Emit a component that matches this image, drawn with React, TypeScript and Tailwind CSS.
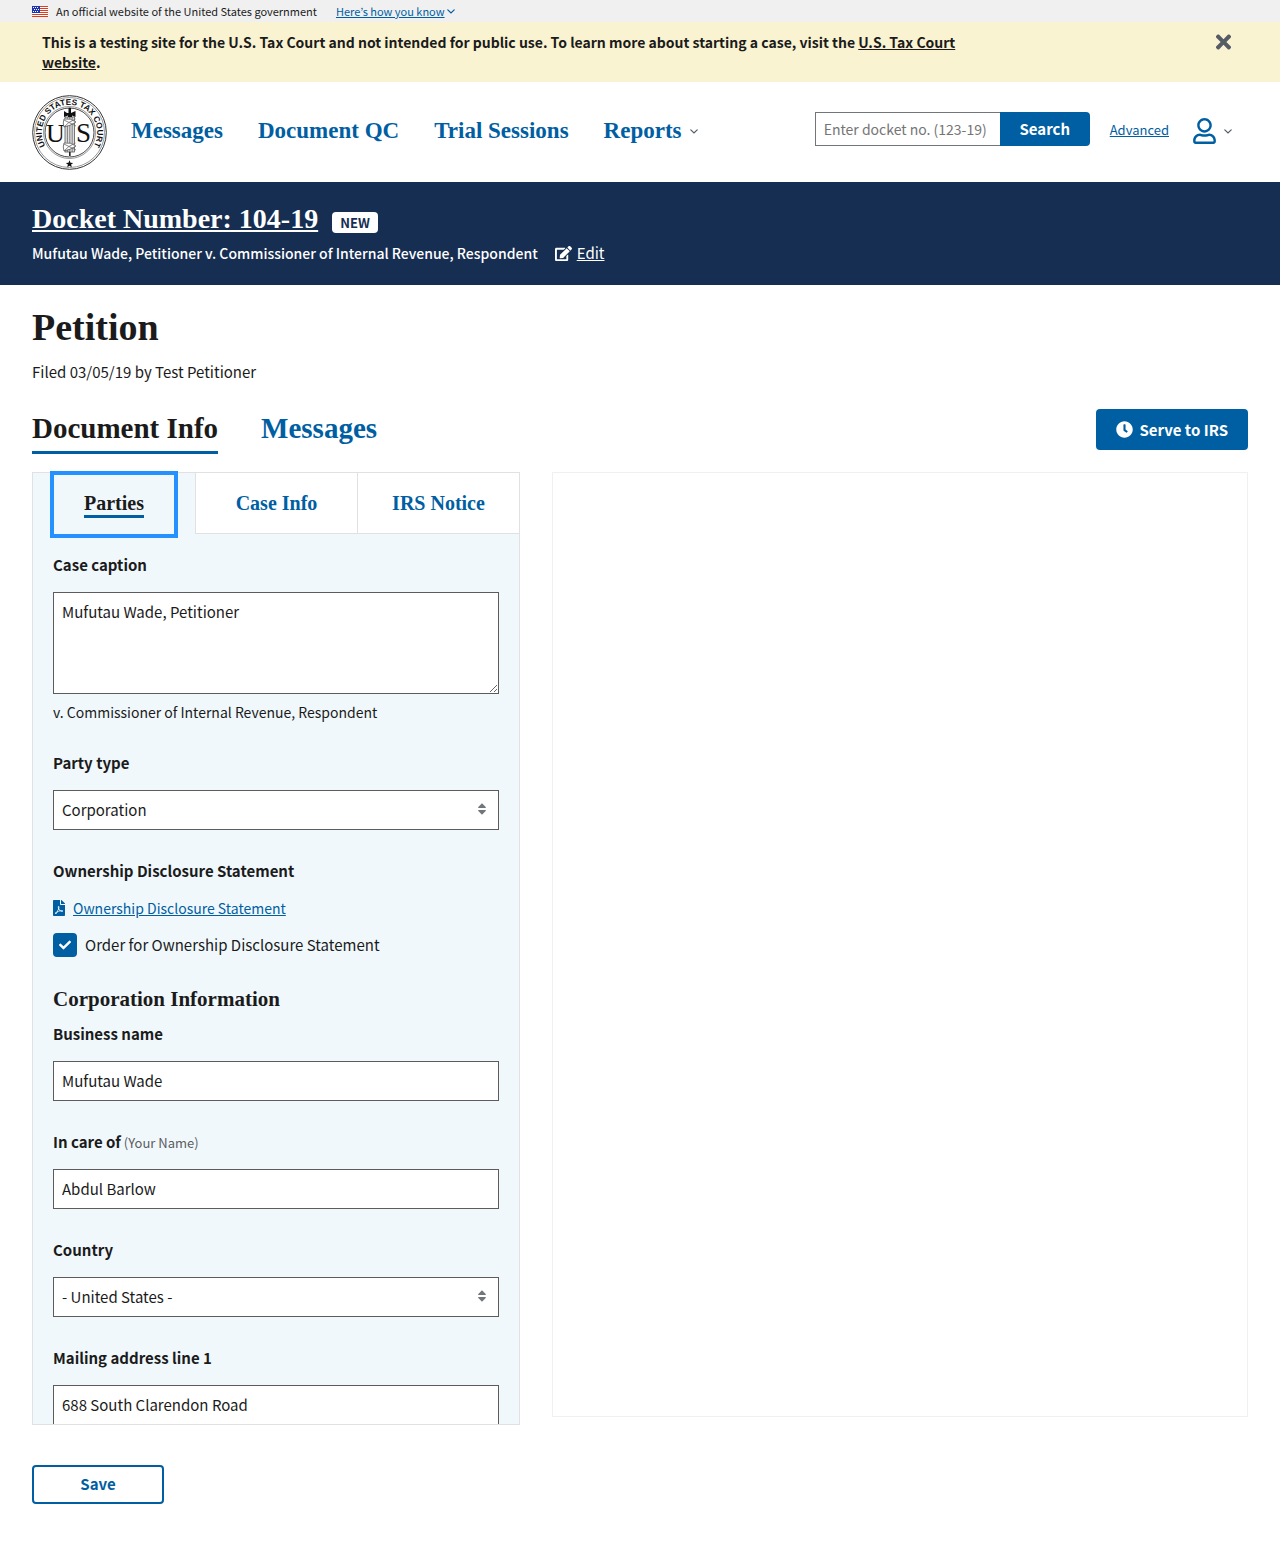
import React from "react";
import { FaCheck, FaClock, FaEdit, FaFilePdf, FaRegUser, FaTimes } from "react-icons/fa";

const serif = "font-['Source_Serif_Pro','Liberation_Serif',serif] font-bold";
const sans = "font-['Source_Sans_Pro','Noto_Sans_CJK_KR',sans-serif]";
const field = "block w-full border border-[#5c5c5c] bg-white px-2 text-[15px] text-[#1b1b1b]";

function Flag() {
  return (
    <svg viewBox="0 0 16 11" className="h-[11px] w-4 shrink-0" aria-hidden="true" shapeRendering="crispEdges">
      <rect width="16" height="11" fill="#fff" />
      {[0, 2, 4, 6, 8, 10].map((y) => (
        <rect key={y} y={y} width="16" height="1" fill="#db3e1f" />
      ))}
      <rect width="8" height="7" fill="#1e33b1" />
      {[1, 3, 5].map((y) =>
        [1, 3, 5].map((x) => <rect key={`${x}-${y}`} x={y === 3 ? x + 1 : x} y={y} width="1" height="1" fill="#fff" />)
      )}
    </svg>
  );
}

function Chevron({ className }: { className: string }) {
  return (
    <svg viewBox="0 0 8 5" className={className} fill="none" stroke="currentColor" strokeWidth="1.2" strokeLinecap="round" aria-hidden="true">
      <path d="M0.8 0.8 L4 4 L7.2 0.8" />
    </svg>
  );
}

function SortIcon() {
  return (
    <svg viewBox="0 0 8 12" className="pointer-events-none absolute right-[13px] top-[13px] h-3 w-2" fill="#71767a" aria-hidden="true">
      <path d="M4 0.3 L7.7 4 Q8.3 5 7.3 5 H0.7 Q-0.3 5 0.3 4 Z M4 11.7 L7.7 8 Q8.3 7 7.3 7 H0.7 Q-0.3 7 0.3 8 Z" />
    </svg>
  );
}

function Seal() {
  return (
    <svg viewBox="0 0 75 75" className="size-[75px]" role="img" aria-label="United States Tax Court seal">
      <g fill="none" stroke="#333">
        <circle cx="37.5" cy="37.5" r="36.8" strokeWidth="1" />
        <circle cx="37.5" cy="37.5" r="35" strokeWidth="0.5" />
        <circle cx="37.5" cy="37.5" r="26" strokeWidth="0.5" />
        <circle cx="37.5" cy="37.5" r="24.5" strokeWidth="0.9" />
      </g>
      <path id="seal-arc" d="M37 65.2 A27.7 27.7 0 1 1 38 65.2" fill="none" />
      <text className="font-['Liberation_Sans',sans-serif] font-bold" fontSize="8.3" fill="#111">
        <textPath href="#seal-arc" startOffset="50%" textAnchor="middle">UNITED STATES TAX COURT</textPath>
      </text>
      <text x="23.5" y="47" textAnchor="middle" fontSize="26" fill="#111" className="font-['Liberation_Serif',serif]">U</text>
      <text x="51.5" y="47" textAnchor="middle" fontSize="27" fill="#111" className="font-['Liberation_Serif',serif]">S</text>
      <rect x="33" y="15" width="10" height="45" fill="#fff" />
      <rect x="33" y="22" width="9.5" height="35" fill="#ddd" stroke="#444" strokeWidth="0.7" />
      <path d="M35.4 22 V57 M37.8 12 V61 M40.2 22 V57" stroke="#666" strokeWidth="0.8" />
      <path d="M32 16 L35 18 H36.5 V13 H39 V18 L43.5 16 V22 L40 20.5 V22 H36 V20.5 L32 22 Z" fill="#111" />
      <path d="M32 24 Q39 23 44 27 Q38 31 32 32 Q30.5 28 32 24 Z M32 48 Q39 47 44 51 Q38 55 32 56 Q30.5 52 32 48 Z" fill="#fff" stroke="#555" strokeWidth="0.8" />
      <path d="M43.5 24 Q36 27 32 32 M44 31 Q38 28 32 25 M43.5 48 Q36 51 32 56 M44 55 Q38 52 32 49" fill="none" stroke="#666" strokeWidth="0.8" />
      <path d="M37.8 57 V61" stroke="#222" strokeWidth="1.5" />
      <path d="M37.5 65.2 L38.5 67.8 L41.2 67.9 L39.1 69.6 L39.8 72.2 L37.5 70.7 L35.2 72.2 L35.9 69.6 L33.8 67.9 L36.5 67.8 Z" fill="#111" />
    </svg>
  );
}

function Label({ id, children, hint }: { id: string; children: React.ReactNode; hint?: string }) {
  return (
    <label htmlFor={id} className="mb-[15px] block text-[15px] leading-6 font-bold">
      {children}
      {hint && <span className="text-[13px] leading-none font-normal text-[#5c5c5c]"> {hint}</span>}
    </label>
  );
}

function TextField({ id, label, hint, value }: { id: string; label: string; hint?: string; value: string }) {
  return (
    <div>
      <Label id={id} hint={hint}>{label}</Label>
      <input id={id} type="text" defaultValue={value} className={`${field} h-10 pb-0.5`} />
    </div>
  );
}

function SelectField({ id, label, value }: { id: string; label: string; value: string }) {
  return (
    <div>
      <Label id={id}>{label}</Label>
      <div className="relative">
        <select id={id} className={`${field} h-10 appearance-none`}>
          <option>{value}</option>
        </select>
        <SortIcon />
      </div>
    </div>
  );
}

export default function App() {
  return (
    <div className={`${sans} bg-white pb-16 text-[15px] leading-6 text-[#1b1b1b]`}>
      <div className="flex h-[22px] items-center bg-[#f0f0f0] px-8 text-[11px]">
        <Flag />
        <span className="ml-2">An official website of the United States government</span>
        <button type="button" className="ml-[19px] flex items-center gap-0.5 text-[#005ea2]">
          <span className="underline">Here’s how you know</span>
          <Chevron className="h-[5px] w-2" />
        </button>
      </div>

      <div className="flex items-start justify-between bg-[#faf3d1] py-2.5 pr-12 pl-[42px]">
        <p className="max-w-[960px] text-[14px] leading-5 font-bold">
          This is a testing site for the U.S. Tax Court and not intended for public use. To learn more about starting a case, visit the{" "}
          <a href="#court" className="underline">U.S. Tax Court website</a>.
        </p>
        <button type="button" aria-label="Close" className="text-[#565c65]">
          <FaTimes className="h-5 w-[17px] scale-110" />
        </button>
      </div>

      <header className="flex h-[100px] items-center pr-12 pl-8">
        <a href="#home"><Seal /></a>
        <nav className={`${serif} mb-0.5 ml-6 flex items-center gap-[35px] text-[23px] leading-8 text-[#005ea2]`}>
          <a href="#messages">Messages</a>
          <a href="#qc">Document QC</a>
          <a href="#sessions">Trial Sessions</a>
          <button type="button" className="flex items-center gap-2">
            Reports
            <Chevron className="h-[5px] w-2 text-[#565c65]" />
          </button>
        </nav>
        <form className="mb-1.5 ml-auto flex h-[34px]" onSubmit={(e) => e.preventDefault()}>
          <input
            type="text"
            aria-label="Docket number"
            placeholder="Enter docket no. (123-19)"
            className="w-[185px] border border-r-0 border-[#71767a] px-2 text-[14px] placeholder:text-[#757575]"
          />
          <button type="submit" className="w-[90px] rounded-r bg-[#005ea2] text-[15px] font-bold text-white">Search</button>
        </form>
        <a href="#advanced" className="mb-1 ml-5 text-[13px] text-[#005ea2] underline">Advanced</a>
        <button type="button" aria-label="Account" className="mb-0.5 ml-6 flex items-center gap-2">
          <FaRegUser className="h-[26px] w-[23px] text-[#005ea2]" />
          <Chevron className="h-[5px] w-2 text-[#565c65]" />
        </button>
      </header>

      <div className="h-[103px] bg-[#162e51] px-8 pt-[19px] text-white">
        <div className="flex items-center gap-3.5">
          <h1 className={`${serif} text-[28px] leading-9`}>
            <a href="#docket" className="underline decoration-2 underline-offset-2">Docket Number: 104-19</a>
          </h1>
          <span className="mt-1.5 h-[21px] rounded-sm bg-white px-2 text-[13px] leading-[22px] font-bold text-[#162e51]">NEW</span>
        </div>
        <div className="mt-1 flex items-center">
          <p className="text-[14px] font-medium">Mufutau Wade, Petitioner v. Commissioner of Internal Revenue, Respondent</p>
          <a href="#edit" className="ml-[17px] flex items-center gap-[5px] text-[15px]">
            <FaEdit className="size-[17px]" />
            <span className="underline">Edit</span>
          </a>
        </div>
      </div>

      <main className="px-8">
        <h2 className={`${serif} pt-5 text-[38px] leading-[44px]`}>Petition</h2>
        <p className="mt-[11px]">Filed 03/05/19 by Test Petitioner</p>

        <div className="mt-[25px] flex items-start justify-between">
          <div role="tablist" className={`${serif} flex gap-[43px] text-[29px] leading-[38px]`}>
            <button type="button" role="tab" aria-selected="true" className="h-[45px] border-b-3 border-[#005ea2] pb-1">Document Info</button>
            <button type="button" role="tab" aria-selected="false" className="h-[45px] border-b-3 border-transparent pb-1 text-[#005ea2]">Messages</button>
          </div>
          <button type="button" className="flex h-[41px] items-center gap-1.5 rounded bg-[#005ea2] px-5 text-[15px] font-bold text-white">
            <FaClock className="size-[17px]" />
            Serve to IRS
          </button>
        </div>

        <div className="mt-[18px] grid grid-cols-12 items-start gap-8">
          <section className="col-span-5 h-[953px] overflow-clip border border-[#dfe1e2] bg-[#f0f8fc] [overflow-clip-margin:4px]">
            <div role="tablist" className={`${serif} grid h-[61px] grid-cols-3 text-[20px] leading-6`}>
              <div className="flex justify-center">
                <button type="button" role="tab" aria-selected="true" className="relative mt-0.5 h-[59px] px-[30px] outline-4 outline-[#2491ff]">
                  <span className="block border-b-3 border-[#005ea2] leading-6">Parties</span>
                </button>
              </div>
              <button type="button" role="tab" aria-selected="false" className="border-b border-l border-[#dfe1e2] bg-white text-[#005ea2]">Case Info</button>
              <button type="button" role="tab" aria-selected="false" className="border-b border-l border-[#dfe1e2] bg-white text-[#005ea2]">IRS Notice</button>
            </div>
            <div className="h-[890px] overflow-hidden px-5 pt-[19px]">
              <Label id="caption">Case caption</Label>
              <textarea id="caption" defaultValue="Mufutau Wade, Petitioner" className={`${field} h-[102px] resize-y py-2 leading-[22px]`} />
              <p className="mt-1.5 mb-[27px] text-[14px]">v. Commissioner of Internal Revenue, Respondent</p>
              <SelectField id="party" label="Party type" value="Corporation" />
              <h3 className="mt-[29px] font-bold">Ownership Disclosure Statement</h3>
              <a href="#ods" className="mt-[13px] flex items-center gap-2 text-[14px] text-[#005ea2]">
                <FaFilePdf className="h-4 w-3" />
                <span className="underline">Ownership Disclosure Statement</span>
              </a>
              <label className="relative mt-[13px] flex items-center gap-2">
                <input type="checkbox" defaultChecked className="peer size-6 appearance-none rounded bg-white checked:bg-[#005ea2]" />
                <FaCheck className="absolute left-1.5 hidden size-3 text-white peer-checked:block" />
                Order for Ownership Disclosure Statement
              </label>
              <h3 className={`${serif} mt-[30px] mb-[11px] text-[21px]`}>Corporation Information</h3>
              <div className="flex flex-col gap-[29px]">
                <TextField id="business" label="Business name" value="Mufutau Wade" />
                <TextField id="care" label="In care of" hint="(Your Name)" value="Abdul Barlow" />
                <SelectField id="country" label="Country" value="- United States -" />
                <TextField id="address" label="Mailing address line 1" value="688 South Clarendon Road" />
              </div>
            </div>
          </section>
          <section aria-label="Document preview" className="col-span-7 h-[945px] border border-[#f0f0f0]" />
        </div>

        <button type="button" className="mt-10 h-[39px] w-[132px] rounded border-2 border-[#005ea2] pb-0.5 text-[15px] font-bold text-[#005ea2]">Save</button>
      </main>
    </div>
  );
}
